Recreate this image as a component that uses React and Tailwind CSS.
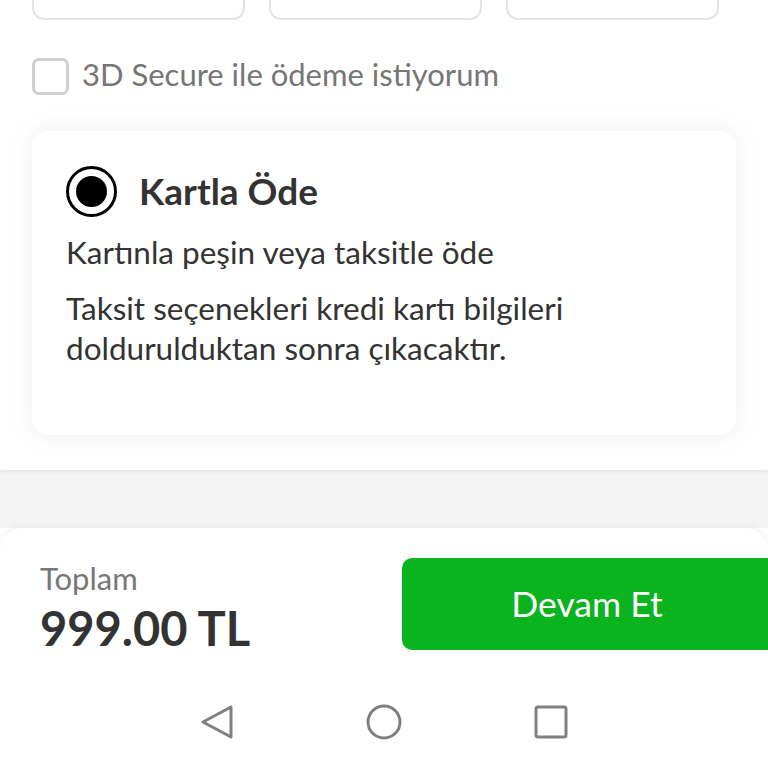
export default function App() {
  return (
    <div
      className="w-[768px] h-[768px] overflow-hidden bg-white flex flex-col"
      style={{ fontFamily: "Lato, 'Noto Sans', sans-serif" }}
    >
      {/* Top section */}
      <div className="relative bg-white shadow-[0_2px_3px_rgba(0,0,0,0.06)] z-10 h-[470px] shrink-0">
        <div className="flex gap-6 px-8 mt-[-30px]">
          <div className="w-[213px] h-[50px] rounded-xl border-2 border-[#e4e4e4]" />
          <div className="w-[213px] h-[50px] rounded-xl border-2 border-[#e4e4e4]" />
          <div className="w-[213px] h-[50px] rounded-xl border-2 border-[#e4e4e4]" />
        </div>
        <div className="flex items-center mt-[38px] ml-8 gap-[13px]">
          <div className="w-[37px] h-[37px] rounded-[7px] border-[3px] border-[#cfcfcf] bg-white" />
          <span className="text-[31px] leading-[36px] text-[#767676] -mt-[5px]">3D Secure ile ödeme istiyorum</span>
        </div>
        <div className="mx-8 mt-[36px] rounded-2xl bg-white shadow-[0_0_28px_rgba(0,0,0,0.07)] pt-[35px] pb-[67px] pl-[34px]">
          <div className="flex items-center h-[50px] gap-[22px]">
            <div className="w-[51px] h-[51px] rounded-full border-[3px] border-black flex items-center justify-center">
              <div className="w-[31px] h-[31px] rounded-full bg-black" />
            </div>
            <span className="text-[37px] leading-[44px] font-bold text-[#333333]">Kartla Öde</span>
          </div>
          <p className="mt-[16px] text-[31.5px] leading-[40px] text-[#333333]">Kartınla peşin veya taksitle öde</p>
          <p className="mt-[16px] text-[31.5px] leading-[40px] text-[#333333]">
            Taksit seçenekleri kredi kartı bilgileri
            <br />
            doldurulduktan sonra çıkacaktır.
          </p>
        </div>
      </div>

      {/* Gray band */}
      <div className="h-[58px] shrink-0 bg-[#f4f4f4]" />

      {/* Bottom panel */}
      <div className="flex-1 bg-white rounded-t-[22px] shadow-[0_-2px_6px_rgba(0,0,0,0.05)] flex flex-col relative z-10">
        <div className="flex items-start justify-between">
          <div className="pl-10 pt-[32px]">
            <div className="text-[31px] leading-[36px] text-[#777777]">Toplam</div>
            <div className="mt-[6px] text-[47px] leading-[52px] font-bold text-[#333333]">999.00 TL</div>
          </div>
          <div className="mt-[30px] mr-[-20px] w-[386px] h-[92px] rounded-[10px] bg-[#09b41f] flex items-center justify-center pr-[16px]">
            <span className="text-[35.5px] leading-[42px] text-white">Devam Et</span>
          </div>
        </div>
        <div className="flex items-center justify-center gap-[131px] mt-[50px]">
          <svg width="36" height="36" viewBox="0 0 36 36" fill="none" stroke="#808080" strokeWidth="3" strokeLinejoin="round">
            <path d="M32 3 L4 18 L32 33 Z" />
          </svg>
          <svg width="36" height="36" viewBox="0 0 36 36" fill="none" stroke="#808080" strokeWidth="3">
            <circle cx="18" cy="18" r="16" />
          </svg>
          <svg width="36" height="36" viewBox="0 0 36 36" fill="none" stroke="#808080" strokeWidth="3" strokeLinejoin="round">
            <rect x="3" y="3" width="30" height="30" rx="2" />
          </svg>
        </div>
      </div>
    </div>
  );
}
